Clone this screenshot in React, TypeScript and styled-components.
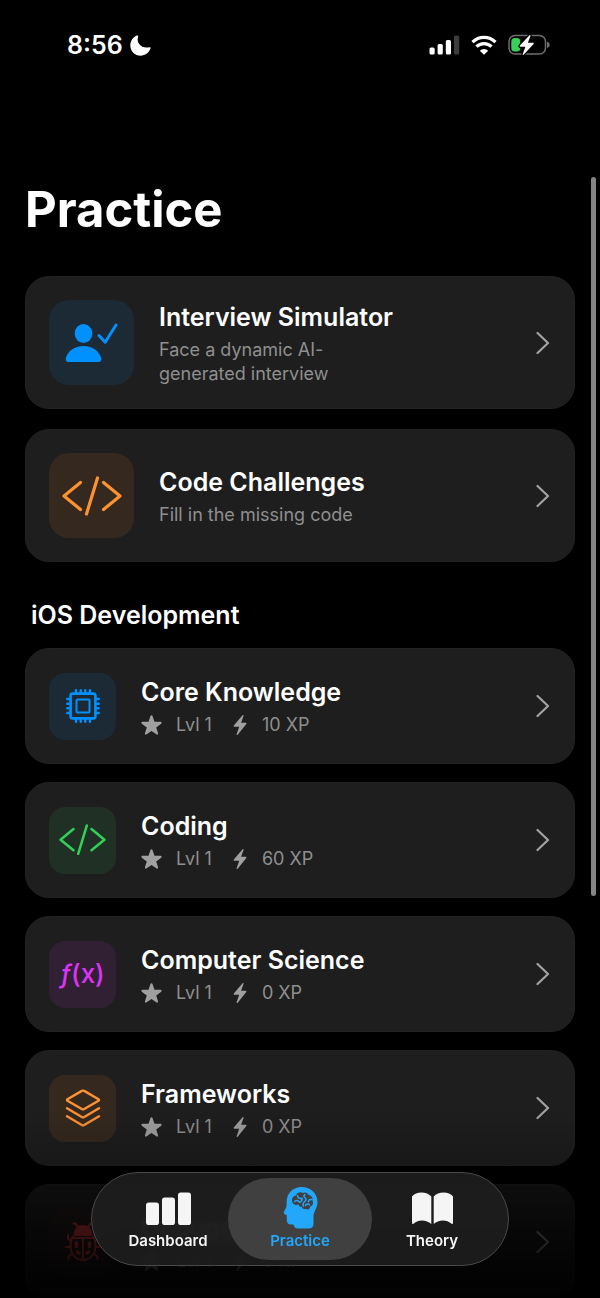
import React from "react";
import styled, { createGlobalStyle } from "styled-components";

const GlobalStyle = createGlobalStyle`
  * { box-sizing: border-box; }
  body {
    margin: 0;
    background: #000;
    color: #fff;
    font-family: Inter, "Liberation Sans", sans-serif;
  }
  h1, h2, h3, p, ul { margin: 0; padding: 0; }
  ul { list-style: none; }
  a { color: inherit; text-decoration: none; }
  svg { display: block; flex: none; }
`;

const Screen = styled.div`
  position: relative;
  height: 100vh;
  overflow: hidden;
`;

const StatusBar = styled.header`
  display: flex;
  align-items: center;
  justify-content: space-between;
  height: 90px;
  padding: 0 50px 0 67px;
`;

const StatusGroup = styled.div<{ $gap: number }>`
  display: flex;
  align-items: center;
  gap: ${(p) => p.$gap}px;
`;

const Clock = styled.time`
  font-size: 25px;
  font-weight: 600;
  line-height: 30px;
`;

const Content = styled.main`
  padding: 88px 25px 0;
`;

const PageTitle = styled.h1`
  font-size: 49px;
  font-weight: 700;
  line-height: 64px;
  margin-bottom: 34px;
`;

const SectionTitle = styled.h2`
  font-size: 25px;
  font-weight: 600;
  line-height: 30px;
  padding: 38px 6px 18px;
`;

const CardList = styled.ul`
  display: flex;
  flex-direction: column;
  gap: 18px;
`;

const FeatureList = styled(CardList)`
  gap: 20px;
`;

const Card = styled.a`
  display: flex;
  align-items: center;
  gap: 25px;
  min-height: 116px;
  padding: 20px 24px;
  border: 1px solid #222;
  border-radius: 24px;
  background: #1e1e1e;
`;

const CardBody = styled.div`
  flex: 1;
  min-width: 0;
`;

const FeatureCard = styled(Card)`
  min-height: 133px;
  ${CardBody} { padding-top: 2px; }
`;

const IconTile = styled.span<{ $size: number; $bg: string; $color: string }>`
  display: flex;
  flex: none;
  align-items: center;
  justify-content: center;
  width: ${(p) => p.$size}px;
  height: ${(p) => p.$size}px;
  margin-left: -1px;
  border-radius: ${(p) => (p.$size > 70 ? 20 : 16)}px;
  background: ${(p) => p.$bg};
  color: ${(p) => p.$color};
`;

const CardTitle = styled.h3`
  font-size: 25px;
  font-weight: 600;
  line-height: 32px;
`;

const Description = styled.p`
  max-width: 220px;
  color: #8f8f8f;
  font-size: 18px;
  line-height: 24px;
  margin-top: 5px;
`;

const Stats = styled.div`
  display: flex;
  align-items: center;
  color: #8f8f8f;
  font-size: 18px;
  line-height: 24px;
  margin-top: 5px;
  svg { color: #a0a0a0; }
`;

const Level = styled.span`
  margin: 0 21px 0 14px;
`;

const Points = styled.span`
  margin-left: 15px;
`;

const FunctionGlyph = styled.span`
  font-size: 26px;
  font-weight: 500;
  line-height: 30px;
  i { font-style: italic; }
`;

const BottomFade = styled.div`
  position: absolute;
  inset: auto 0 0;
  height: 190px;
  pointer-events: none;
  background: linear-gradient(
    rgba(0, 0, 0, 0) 0,
    rgba(0, 0, 0, 0.2) 58px,
    rgba(0, 0, 0, 0.55) 76px,
    rgba(0, 0, 0, 0.75) 120px,
    rgba(0, 0, 0, 0.97) 190px
  );
`;

const ScrollThumb = styled.div`
  position: absolute;
  top: 177px;
  right: 4px;
  width: 5px;
  height: 55.4%;
  border-radius: 3px;
  background: #858585;
`;

const TabBar = styled.nav`
  position: absolute;
  bottom: 32px;
  left: 50%;
  transform: translateX(-50%);
  display: flex;
  width: calc(100% - 40px);
  max-width: 418px;
  height: 94px;
  padding: 5px 10px;
  border: 1px solid #484848;
  border-radius: 47px;
  background: rgba(31, 31, 31, 0.88);
  backdrop-filter: blur(2px);
`;

const Tab = styled.a<{ $active?: boolean }>`
  position: relative;
  display: flex;
  flex: 1;
  flex-direction: column;
  align-items: center;
  justify-content: flex-end;
  gap: ${(p) => (p.$active ? 0 : 4)}px;
  padding-bottom: 7px;
  color: ${(p) => (p.$active ? "#22a7fb" : "#f5f5f5")};
  font-size: 15px;
  font-weight: 600;
  line-height: 24px;
  &::before {
    content: "";
    position: absolute;
    z-index: -1;
    inset: 0 -6px;
    border-radius: 41px;
    background: ${(p) => (p.$active ? "#404040" : "transparent")};
  }
`;

const Moon = () => (
  <svg width="21" height="21" viewBox="0 0 21 21" fill="currentColor" aria-hidden="true">
    <path d="M6.800.5C7.800.1 8.500.8 8.100 1.700 6 7.800 11.800 14.200 19.200 12.200c1-.3 1.700.5 1.300 1.400C18.800 18 15 20.700 10.600 20.700 4.900 20.700.3 16.300.3 10.500.3 6.200 2.800 2.200 6.800.5Z" />
  </svg>
);

const Signal = () => (
  <svg width="31" height="20" viewBox="0 0 31 20" fill="#fff" aria-hidden="true">
    <rect x="0.500" y="12.500" width="5.200" height="7" rx="1.500" />
    <rect x="8.600" y="9" width="5.200" height="10.500" rx="1.500" />
    <rect x="16.800" y="5" width="5.200" height="14.500" rx="1.500" />
    <rect x="25" y="0.500" width="5.200" height="19" rx="1.500" fill="#3c3c3c" />
  </svg>
);

const Wifi = () => (
  <svg width="26" height="20" viewBox="0 0 26 20" fill="none" stroke="#fff" strokeWidth="3.300" aria-hidden="true">
    <path d="M1.500 7.200a16.300 16.300 0 0 1 23 0" />
    <path d="M5.500 11.700a10.600 10.600 0 0 1 15 0" />
    <path d="M13 19.800l-4.200-4a6 6 0 0 1 8.400 0Z" fill="#fff" stroke="none" />
  </svg>
);

const Battery = () => (
  <svg width="42" height="22" viewBox="0 0 42 22" aria-hidden="true">
    <rect x="1" y="1.500" width="36.500" height="18.500" rx="6" fill="none" stroke="#6d6d6d" strokeWidth="1.500" />
    <path d="M39 7.500q2.800 1 2.800 3.200T39 14Z" fill="#6d6d6d" />
    <rect x="3.300" y="4" width="9" height="13.500" rx="3.500" fill="#36d158" />
    <path
      d="M21.500 1.200 11.800 11.600q-.6 1 .5 1.200h5.100l-2.700 7.400q-.1 1.100.9.6L25.600 10q.7-1-.5-1.200h-5.200l2.600-6.900q.1-1.200-1-.7Z"
      fill="#fff"
      stroke="#000"
      strokeWidth="2.500"
      paintOrder="stroke"
    />
  </svg>
);

const Chevron = () => (
  <svg width="14" height="24" viewBox="0 0 14 24" fill="none" stroke="#a3a3a3" strokeWidth="2.200" strokeLinecap="round" strokeLinejoin="round" aria-hidden="true">
    <path d="M1.500 2 12 12 1.500 22" />
  </svg>
);

const PersonCheck = () => (
  <svg width="54" height="40" viewBox="0 0 54 40" fill="currentColor" aria-hidden="true">
    <ellipse cx="18.500" cy="10.500" rx="8.800" ry="9.500" />
    <path d="M3.500 39C1.500 39 .4 37.600.8 35.500 2.500 28 9.500 23 18.500 23s16 5 17.700 12.500C36.600 37.600 35.500 39 33.500 39Z" />
    <path d="M34 12.500 40.200 19.200 51 2" fill="none" stroke="currentColor" strokeWidth="3" strokeLinecap="round" strokeLinejoin="round" />
  </svg>
);

const CodeIcon = ({ width }: { width: number }) => (
  <svg width={width} height={(width * 40) / 60} viewBox="0 0 60 40" fill="none" stroke="currentColor" strokeWidth="3.200" strokeLinecap="round" strokeLinejoin="round" aria-hidden="true">
    <path d="M18.500 6.500 2 20l16.500 13.500M41.500 6.500 58 20 41.500 33.500M35.500 2 24.500 38" />
  </svg>
);

const ChipIcon = () => (
  <svg width="34" height="34" viewBox="0 0 34 34" fill="none" stroke="currentColor" strokeLinecap="round" aria-hidden="true">
    <rect x="4.600" y="4.600" width="24.800" height="24.800" rx="2" strokeWidth="2.600" />
    <rect x="10.500" y="10.500" width="13" height="13" rx="1" strokeWidth="2" />
    <path strokeWidth="2.400" d="M10 1.300v3M14.700 1.300v3M19.300 1.300v3M24 1.300v3M10 29.700v3M14.700 29.700v3M19.300 29.700v3M24 29.700v3M1.300 10h3M1.300 14.700h3M1.300 19.300h3M1.300 24h3M29.700 10h3M29.700 14.700h3M29.700 19.300h3M29.700 24h3" />
  </svg>
);

const LayersIcon = () => (
  <svg width="36" height="38" viewBox="0 0 36 38" fill="none" stroke="currentColor" strokeWidth="2.400" strokeLinecap="round" strokeLinejoin="round" aria-hidden="true">
    <path d="M16.800 1.900q1.200-.6 2.400 0L33.500 10.200q1 .7 0 1.500L19.200 20q-1.200.7-2.400 0L2.500 11.700q-1-.8 0-1.500Z" />
    <path d="M2 19.200 16.800 28q1.200.7 2.400 0L34 19.200" />
    <path d="M2 27.200 16.800 36q1.200.7 2.400 0L34 27.200" />
  </svg>
);

const BugIcon = () => (
  <svg width="36" height="40" viewBox="0 0 36 40" fill="none" stroke="currentColor" strokeWidth="2" strokeLinecap="round" strokeLinejoin="round" aria-hidden="true">
    <path d="M9.500 13C9.500 7.500 13 4 18 4s8.500 3.500 8.500 9Z" fill="currentColor" />
    <path d="M13 5 10.500 1.500H8.500M23 5l2.500-3.500h2M6.500 16h23M18 16v21" />
    <path d="M8 14.500C4.500 19 4.500 30 9.500 34.500c4 4.500 13 4.500 17 0C31.500 30 31.500 19 28 14.500" />
    <path d="M5.500 18.500 3 16.500V13M5.500 25H1M7 32l-3.500 2.500V37M30.500 18.500l2.500-2V13M30.500 25H35M29 32l3.500 2.500V37" />
    <path d="M11.500 21v3.500M24.500 21v3.500M12.500 30l1.500 1M23.500 30l-1.500 1" strokeWidth="3.600" />
  </svg>
);

const Star = () => (
  <svg width="21" height="20" viewBox="0 0 21 20" fill="currentColor" aria-hidden="true">
    <path d="M10.500.3q.8 0 1.100 1l1.900 5.500h6q1.100.1 1.200.9 0 .6-.8 1.200L15.200 12.400l1.800 5.700q.3 1-.3 1.400-.6.400-1.400-.2L10.500 15.900 5.700 19.300q-.8.600-1.400.2-.6-.4-.3-1.400l1.800-5.700L1.100 8.900Q.3 8.300.3 7.700q.1-.8 1.200-.9h6L9.400 1.300q.3-1 1.100-1Z" />
  </svg>
);

const Bolt = () => (
  <svg width="14" height="22" viewBox="0 0 14 22" fill="currentColor" aria-hidden="true">
    <path d="M9.600 1.200.8 11.500q-.6.900.4 1.200h5L3.600 20.300q-.1 1.200.9.600L13.300 10q.6-.9-.4-1.200H8.100l2.500-7q.1-1.200-1-.6Z" />
  </svg>
);

const BarsIcon = () => (
  <svg width="46" height="33" viewBox="0 0 46 33" fill="currentColor" aria-hidden="true">
    <rect x="1" y="10.500" width="13" height="22.500" rx="2.800" />
    <rect x="17" y="5.500" width="13" height="27.500" rx="2.800" />
    <rect x="33" y="0.500" width="13" height="32.500" rx="2.800" />
  </svg>
);

const HeadIcon = () => (
  <svg width="35" height="42" viewBox="0 0 35 42" aria-hidden="true">
    <path
      fill="currentColor"
      d="M18.500 0C28 0 34.500 6.700 34.500 15c0 6-4 9.500-4 14V37c0 3-2 4.500-5 4.500H15c-2.500 0-4-1.500-4.500-4H8c-3 0-4.200-2-4.200-4.500v-4.500L1.500 27c-1.200-.8-1-2 .1-3.600 2.400-3.600 2-5 2-8.400C3.600 6.500 10 0 18.500 0Z"
    />
    <path
      fill="#404040"
      d="M9 14c-.4-3 1.500-5.500 4-5.600C14 5.500 17.500 4.500 20 6c2.300-1.300 5-.2 5.500 2 3 .3 4.800 3 4 5.500 1.300 3 0 5.500-2.400 6 .2 2.500-2.600 4-4.600 2.300-2 .6-3.500-.3-3.700-2-2 .3-3-.8-3.200-2.300C13 18.700 9.500 17.500 9 14Z"
    />
    <path
      fill="none"
      stroke="currentColor"
      strokeWidth="1.500"
      strokeLinecap="round"
      d="M14.500 8.500c.2 2.200 1.500 3.200 3.500 3M11.500 14.500c2.300-1.800 4-1 5 .8 1.800-.3 2.600-1.700 2.700-4M22 7.500c-1.500 1-1.300 2.500.2 3.500 1.200 1 .8 2.500-.5 3.500-1.500 1-2 2.500-1.300 4.500M29 12.500c-2-.4-3.300.3-3.600 2.200M22.500 18.500c1-1.700 2.500-2 4-.8"
    />
  </svg>
);

const BookIcon = () => (
  <svg width="41" height="33" viewBox="0 0 41 33" fill="currentColor" aria-hidden="true">
    <path d="M0 4.500C2 1.800 5.500.5 9.500.5s7.500 1.300 9.800 4V32C16.800 29.800 13.500 28.500 10 28.500c-3.300 0-5.800 1-8.200 3Q0 33 0 30.500Z" />
    <path d="M41 4.500C39 1.800 35.500.5 31.500.5s-7.500 1.300-9.800 4V32C24.200 29.800 27.500 28.500 31 28.500c3.300 0 5.800 1 8.200 3Q41 33 41 30.500Z" />
  </svg>
);

const features = [
  {
    title: "Interview Simulator",
    text: "Face a dynamic AI-generated interview",
    icon: <PersonCheck />,
    color: "#0091ff",
    bg: "#1b2a35",
  },
  {
    title: "Code Challenges",
    text: "Fill in the missing code",
    icon: <CodeIcon width={60} />,
    color: "#ff9230",
    bg: "#35291f",
  },
];

const topics = [
  { title: "Core Knowledge", xp: 10, icon: <ChipIcon />, color: "#0091ff", bg: "#1b2a35" },
  { title: "Coding", xp: 60, icon: <CodeIcon width={47} />, color: "#30d158", bg: "#203024" },
  {
    title: "Computer Science",
    xp: 0,
    icon: (
      <FunctionGlyph>
        <i>ƒ</i>(x)
      </FunctionGlyph>
    ),
    color: "#db34f2",
    bg: "#312034",
  },
  { title: "Frameworks", xp: 0, icon: <LayersIcon />, color: "#ff9230", bg: "#35291f" },
  { title: "Debugging", xp: 0, icon: <BugIcon />, color: "#ff4245", bg: "#2a1f20" },
];

export default function App() {
  return (
    <Screen>
      <GlobalStyle />
      <StatusBar>
        <StatusGroup $gap={7}>
          <Clock>8:56</Clock>
          <Moon />
        </StatusGroup>
        <StatusGroup $gap={11}>
          <Signal />
          <Wifi />
          <Battery />
        </StatusGroup>
      </StatusBar>
      <Content>
        <PageTitle>Practice</PageTitle>
        <FeatureList>
          {features.map((f) => (
            <li key={f.title}>
              <FeatureCard href="#">
                <IconTile $size={85} $bg={f.bg} $color={f.color}>
                  {f.icon}
                </IconTile>
                <CardBody>
                  <CardTitle>{f.title}</CardTitle>
                  <Description>{f.text}</Description>
                </CardBody>
                <Chevron />
              </FeatureCard>
            </li>
          ))}
        </FeatureList>
        <SectionTitle>iOS Development</SectionTitle>
        <CardList>
          {topics.map((t) => (
            <li key={t.title}>
              <Card href="#">
                <IconTile $size={67} $bg={t.bg} $color={t.color}>
                  {t.icon}
                </IconTile>
                <CardBody>
                  <CardTitle>{t.title}</CardTitle>
                  <Stats>
                    <Star />
                    <Level>Lvl 1</Level>
                    <Bolt />
                    <Points>{t.xp} XP</Points>
                  </Stats>
                </CardBody>
                <Chevron />
              </Card>
            </li>
          ))}
        </CardList>
      </Content>
      <BottomFade />
      <ScrollThumb />
      <TabBar aria-label="Main">
        <Tab href="#dashboard">
          <BarsIcon />
          Dashboard
        </Tab>
        <Tab href="#practice" $active aria-current="page">
          <HeadIcon />
          Practice
        </Tab>
        <Tab href="#theory">
          <BookIcon />
          Theory
        </Tab>
      </TabBar>
    </Screen>
  );
}
